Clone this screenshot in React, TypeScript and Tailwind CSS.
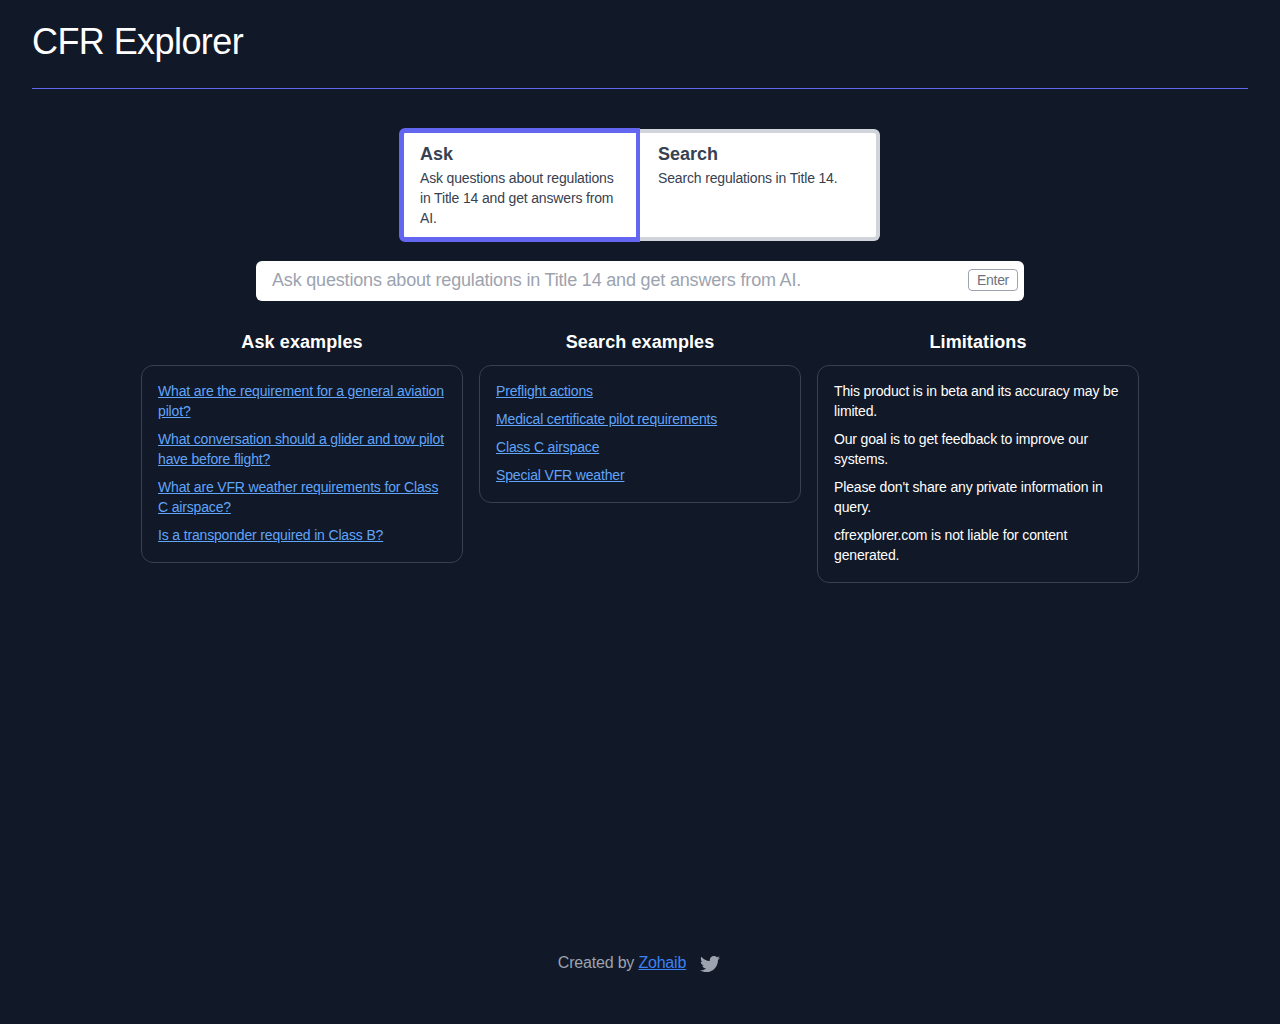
import { FaTwitter } from "react-icons/fa";

const askExamples = [
  "What are the requirement for a general aviation pilot?",
  "What conversation should a glider and tow pilot have before flight?",
  "What are VFR weather requirements for Class C airspace?",
  "Is a transponder required in Class B?",
];

const searchExamples = [
  "Preflight actions",
  "Medical certificate pilot requirements",
  "Class C airspace",
  "Special VFR weather",
];

const limitations = [
  "This product is in beta and its accuracy may be limited.",
  "Our goal is to get feedback to improve our systems.",
  "Please don't share any private information in query.",
  "cfrexplorer.com is not liable for content generated.",
];

function Column({ title, children }: { title: string; children: React.ReactNode }) {
  return (
    <div className="flex-1 min-w-0">
      <h2 className="text-lg leading-7 font-semibold tracking-[0.1px] text-white text-center mb-[9px]">{title}</h2>
      <div className="border border-[#374151] rounded-xl px-4 pt-[15px] pb-[17px] flex flex-col gap-2 text-sm leading-5 tracking-[-0.16px]">
        {children}
      </div>
    </div>
  );
}

function LinkList({ items }: { items: string[] }) {
  return (
    <>
      {items.map((item) => (
        <a key={item} href="#" className="text-[#60a5fa] underline">
          {item}
        </a>
      ))}
    </>
  );
}

export default function App() {
  return (
    <div
      className="min-h-screen bg-[#111827] flex flex-col px-8"
      style={{ fontFamily: '"Liberation Sans", Arial, sans-serif' }}
    >
      <header className="h-[89px] border-b border-[#6366f1] pt-[22px]">
        <h1 className="text-[36px] leading-10 tracking-[-0.58px] text-white">CFR Explorer</h1>
      </header>

      <main className="flex flex-col items-center pt-10">
        <div className="flex items-start w-[480px] text-[#374151]">
          {/* selected tab sticks out 1px past its neighbour */}
          <button className="w-[241px] h-[114px] flex flex-col justify-start text-left bg-white border-[5px] border-r-4 border-[#6366f1] rounded-l-md pl-4 pr-4 pt-2 -mt-px -ml-px">
            <div className="text-lg leading-[26px] font-semibold">Ask</div>
            <div className="text-sm leading-5 tracking-[-0.16px] mt-px">
              Ask questions about regulations in Title 14 and get answers from AI.
            </div>
          </button>
          <button className="w-60 h-[112px] flex flex-col justify-start text-left bg-white border-4 border-l-0 border-[#d1d5db] rounded-r-md pl-[18px] pr-4 pt-2">
            <div className="text-lg leading-[26px] font-semibold">Search</div>
            <div className="text-sm leading-5 tracking-[-0.16px] mt-px">Search regulations in Title 14.</div>
          </button>
        </div>

        <div className="mt-[19px] w-[768px] h-10 bg-white rounded-md flex items-center pl-4 pr-1.5">
          <span className="flex-1 text-lg tracking-[-0.18px] text-[#9ca3af] -mt-[3px]">
            Ask questions about regulations in Title 14 and get answers from AI.
          </span>
          <span className="w-[50px] text-center border border-[#9ca3af] rounded text-sm leading-5 tracking-[-0.3px] text-[#6b7280] -mt-[2px]">
            Enter
          </span>
        </div>

        <div className="mt-[27px] w-[998px] flex items-start gap-4">
          <Column title="Ask examples">
            <LinkList items={askExamples} />
          </Column>
          <Column title="Search examples">
            <LinkList items={searchExamples} />
          </Column>
          <Column title="Limitations">
            {limitations.map((text) => (
              <p key={text} className="text-white">
                {text}
              </p>
            ))}
          </Column>
        </div>
      </main>

      <footer className="mt-auto h-[73px] flex justify-center pr-0.5 text-[#9ca3af] text-base leading-6 tracking-[-0.2px]">
        <span>
          Created by{" "}
          <a href="#" className="text-[#3b82f6] underline">
            Zohaib
          </a>
        </span>
        <FaTwitter className="ml-[14px] mt-[3px] w-5 h-5" />
      </footer>
    </div>
  );
}
